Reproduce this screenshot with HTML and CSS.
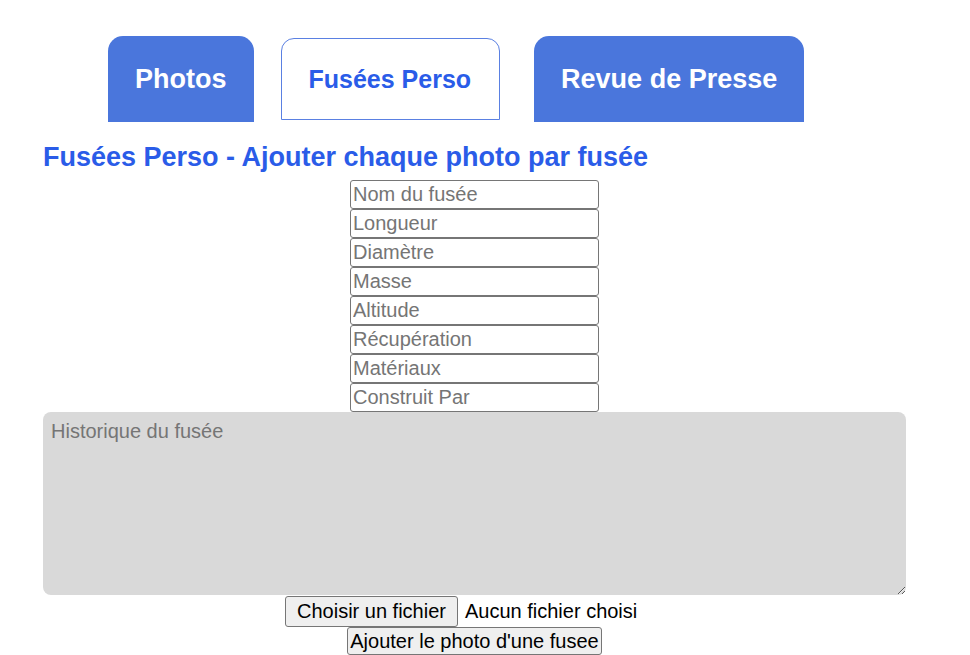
FILE: index.html
```html
<!DOCTYPE html>
<html lang="fr">
<head>
<meta charset="utf-8">
<title>Fusées Perso</title>
<link rel="stylesheet" href="styles.css">
</head>
<body>
<nav class="tabs">
  <a class="tab tab-photos" href="#">Photos</a>
  <a class="tab tab-active" href="#">Fusées Perso</a>
  <a class="tab" href="#">Revue de Presse</a>
</nav>
<main class="content">
  <h1 class="title">Fusées Perso - Ajouter chaque photo par fusée</h1>
  <form class="form">
    <input class="field" type="text" placeholder="Nom du fusée">
    <input class="field" type="text" placeholder="Longueur">
    <input class="field" type="text" placeholder="Diamètre">
    <input class="field" type="text" placeholder="Masse">
    <input class="field" type="text" placeholder="Altitude">
    <input class="field" type="text" placeholder="Récupération">
    <input class="field" type="text" placeholder="Matériaux">
    <input class="field" type="text" placeholder="Construit Par">
    <textarea class="history" placeholder="Historique du fusée"></textarea>
    <div class="file-row">
      <div class="file-widget">
        <button class="btn file-btn" type="button">Choisir un fichier</button>
        <span class="file-name">Aucun fichier choisi</span>
      </div>
    </div>
    <div class="submit-row">
      <button class="btn submit-btn" type="button">Ajouter le photo d'une fusee</button>
    </div>
  </form>
</main>
</body>
</html>
```
FILE: styles.css
```css
html, body {
  margin: 0;
  padding: 0;
  background: #ffffff;
}

body {
  font-family: "Liberation Sans", Arial, sans-serif;
  color: #000;
}

.tabs {
  display: flex;
  align-items: flex-start;
  padding: 36px 0 0 108px;
}

.tab {
  display: flex;
  align-items: center;
  justify-content: center;
  height: 86px;
  box-sizing: border-box;
  padding: 0 27px;
  background: #4a76dc;
  color: #ffffff;
  font-weight: bold;
  font-size: 27px;
  line-height: 31px;
  text-decoration: none;
  border-radius: 15px 15px 0 0;
}

.tab-photos {
  margin-right: 27px;
}

.tab-active {
  margin-top: 2px;
  margin-right: 34px;
  height: 82px;
  background: #ffffff;
  border: 1px solid #5a80e2;
  border-radius: 13px 13px 0 0;
  color: #2a5ce8;
  font-size: 25px;
  line-height: 29px;
  padding: 0 28px 0 27px;
}

.content {
  width: 863px;
  margin-left: 43px;
}

.title {
  margin: 20px 0 7px;
  font-size: 27px;
  line-height: 31px;
  font-weight: bold;
  color: #2a5ce8;
}

.form {
  display: flex;
  flex-direction: column;
  align-items: center;
  margin: 0;
}

.field {
  display: block;
  box-sizing: border-box;
  width: 249px;
  height: 29px;
  margin: 0;
  padding: 1px 2px;
  border: 1px solid #767676;
  border-radius: 3px;
  font-family: "Liberation Sans", Arial, sans-serif;
  font-size: 20px;
  line-height: 23px;
  color: #000;
  background: #fff;
}

.field::placeholder,
.history::placeholder {
  color: #757575;
  opacity: 1;
}

.history {
  display: block;
  box-sizing: border-box;
  width: 863px;
  height: 183px;
  margin: 0;
  padding: 8px 8px;
  border: none;
  border-radius: 8px;
  background: #d9d9d9;
  font-family: "Liberation Sans", Arial, sans-serif;
  font-size: 20px;
  line-height: 23px;
}

.file-row {
  display: flex;
  justify-content: center;
  margin-top: 1px;
}

.file-widget {
  display: flex;
  align-items: center;
  width: 379px;
}

.btn {
  box-sizing: border-box;
  background: #efefef;
  border: 1px solid #767676;
  border-radius: 3px;
  color: #000;
  font-family: "Liberation Sans", Arial, sans-serif;
  font-size: 20px;
  line-height: 23px;
  margin: 0;
}

.file-btn {
  height: 31px;
  padding: 1px 11px;
  margin-right: 7px;
}

.file-name {
  font-size: 20px;
  line-height: 23px;
  white-space: nowrap;
}

.submit-row {
  display: flex;
  justify-content: center;
}

.submit-btn {
  height: 28px;
  padding: 1px 2px;
}
```
